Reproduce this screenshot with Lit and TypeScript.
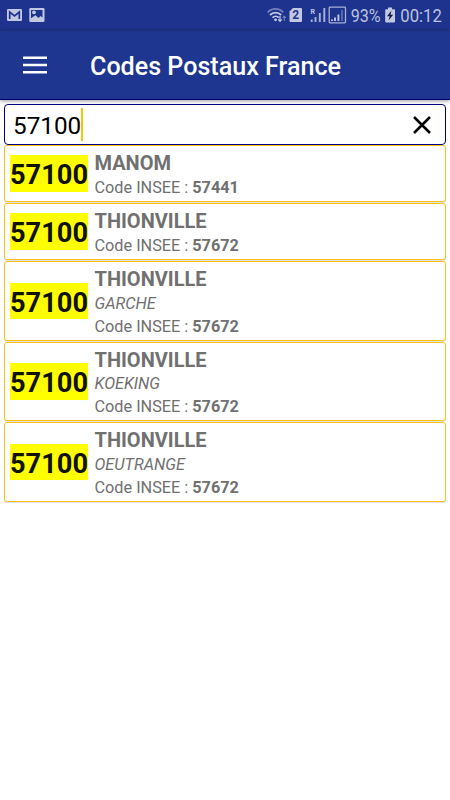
import { LitElement, html, css, nothing } from "lit";
import { customElement, property } from "lit/decorators.js";

@customElement("status-bar")
class StatusBar extends LitElement {
  static styles = css`
    :host { display: flex; align-items: center; height: 30px; background: #1d338e; }
    svg { display: block; width: 450px; height: 30px; }
    .digits { font-family: Roboto, sans-serif; font-size: 19px; fill: #bcc2df; }
    .small { font: bold 12px Roboto, sans-serif; fill: #1d338e; }
    .tiny { font: bold 7px Roboto, sans-serif; fill: #c3c8e2; }
  `;
  render() {
    return html`<svg viewBox="0 0 450 30">
      <rect x="7" y="9" width="15" height="12" rx="1.2" fill="#c3c8e2" />
      <path d="M9.7 19V12L14.5 16L19.3 12V19" fill="none" stroke="#1d338e" stroke-width="1.7" />
      <rect x="29.3" y="8" width="15.2" height="14" rx="1.2" fill="#c3c8e2" />
      <path d="M31 10H42.500V17.500L40.500 16L38.500 18L35.500 15.300L31 18.300Z" fill="#1d338e" />
      <circle cx="34" cy="12.3" r="1.9" fill="#c3c8e2" />
      <g fill="none" stroke-width="1.9">
        <path d="M267.7 12.3C272 7.7 279 7.7 283.2 12.3" stroke="#7581bb" />
        <path d="M270 15C273.2 11.8 278 11.8 281.2 15" stroke="#c3c8e2" />
        <path d="M272.5 17.6C274.3 15.9 277 15.9 278.8 17.6" stroke="#c3c8e2" />
      </g>
      <circle cx="275.5" cy="19.8" r="1.4" fill="#c3c8e2" />
      <path d="M280 16V21M278.2 19.3L280 21.3L281.8 19.3" stroke="#c3c8e2" stroke-width="1.2" fill="none" />
      <path d="M284.3 21V16M282.7 17.9L284.3 16L285.9 17.9" stroke="#7581bb" stroke-width="1.1" fill="none" />
      <path d="M293 8H301Q302 8 302 9V21Q302 22 301 22H290.5Q289.500 22 289.500 21V11.500Z" fill="#c3c8e2" />
      <text class="small" x="292.200" y="19.300">2</text>
      <text class="tiny" x="310.600" y="13.800">R</text>
      <path d="M311.700 19.500V22M315.500 17V22M319.800 13V22M324.300 8V22" stroke="#aab1d6" stroke-width="1.900" />
      <rect x="329.200" y="7.200" width="16.300" height="15.600" rx=".8" fill="none" stroke="#aab1d6" stroke-width="1.300" />
      <path d="M332 19.500V21M335 17.500V21M338.400 14.500V21" stroke="#c3c8e2" stroke-width="1.900" />
      <path d="M342 10V21" stroke="#596aaf" stroke-width="1.900" />
      <text class="digits" x="350.700" y="22" textLength="30" lengthAdjust="spacingAndGlyphs">93%</text>
      <path d="M388 7.500H392V9.200H394Q395 9.200 395 10.200V21.500Q395 22.500 394 22.500H386.200Q385.200 22.500 385.200 21.500V10.200Q385.200 9.200 386.200 9.200H388Z" fill="#c3c8e2" />
      <path d="M391.500 10.500L387 16.200H389.700L388.500 20.500L393.200 14.700H390.500Z" fill="#101a42" />
      <text class="digits" x="400.300" y="22" textLength="41.500" lengthAdjust="spacingAndGlyphs">00:12</text>
    </svg>`;
  }
}

@customElement("postal-card")
class PostalCard extends LitElement {
  @property() name = "";
  @property() area = "";
  @property() insee = "";
  static styles = css`
    :host { display: flex; align-items: center; box-sizing: border-box; height: 57px; margin-bottom: 1px; padding-left: 5px; background: #fff; border: 1px solid #fbc21c; border-radius: 3px; box-shadow: 0 1px 0 #e0e0e4; color: #707070; font: 16.250px/22.700px Roboto, sans-serif; }
    :host([area]) { height: 79.600px; }
    .zip { box-sizing: border-box; width: 78px; height: 36.500px; padding-top: 2px; margin-right: 6.500px; background: #ff0; color: #111100; font-weight: 700; font-size: 27.200px; line-height: 37.500px; text-align: center; white-space: nowrap; }
    .info { padding-top: 3px; }
    .name { margin-bottom: .600px; font-weight: 700; font-size: 20px; line-height: 26px; }
    .area { font-style: italic; }
    b { font-weight: 700; }
  `;
  render() {
    return html`<div class="zip">57100</div>
      <div class="info">
        <div class="name">${this.name}</div>
        ${this.area ? html`<div class="area">${this.area}</div>` : nothing}
        <div>Code INSEE : <b>${this.insee}</b></div>
      </div>`;
  }
}

const results = [
  { name: "MANOM", insee: "57441" },
  { name: "THIONVILLE", insee: "57672" },
  { name: "THIONVILLE", area: "GARCHE", insee: "57672" },
  { name: "THIONVILLE", area: "KOEKING", insee: "57672" },
  { name: "THIONVILLE", area: "OEUTRANGE", insee: "57672" },
];

@customElement("app-root")
class AppRoot extends LitElement {
  static styles = css`
    :host { display: block; height: 800px; overflow: hidden; background: #fff; font-family: Roboto, sans-serif; }
    header { display: flex; align-items: center; box-sizing: border-box; height: 70px; padding: 2px 0 0 23px; background: #1e368f; border-top: 1px solid #1b3078; border-bottom: 1px solid #000070; box-shadow: 0 1px 4px rgba(0, 0, 0, .4); color: #fff; }
    header svg { width: 24px; height: 18px; margin: 0 43px 3px 0; }
    h1 { margin: 0; padding-top: 2px; font-size: 25.100px; font-weight: 500; line-height: 36px; white-space: nowrap; }
    main { padding: 4px 4px 0; }
    .search { display: flex; align-items: center; box-sizing: border-box; height: 41px; padding: 0 14px 0 8px; border: 1px solid #000080; border-radius: 4px; background: #fff; font-size: 24.300px; color: #000; }
    .query { padding-top: 2px; line-height: 39px; }
    .caret { width: 2px; height: 33px; margin-left: -.200px; background: #fcc200; }
    .clear { width: 18px; height: 18px; margin-left: auto; }
  `;
  render() {
    return html`<status-bar></status-bar>
      <header>
        <svg viewBox="0 0 24 18"><path d="M0 1.700H24M0 9H24M0 16.300H24" stroke="#fff" stroke-width="2.500" /></svg>
        <h1>Codes Postaux France</h1>
      </header>
      <main>
        <div class="search">
          <span class="query">57100</span><span class="caret"></span>
          <svg class="clear" viewBox="0 0 18 18"><path d="M1 1L17 17M17 1L1 17" stroke="#000" stroke-width="2.500" /></svg>
        </div>
        <div>
          ${results.map((r) => r.area
            ? html`<postal-card name=${r.name} area=${r.area} insee=${r.insee}></postal-card>`
            : html`<postal-card name=${r.name} insee=${r.insee}></postal-card>`)}
        </div>
      </main>`;
  }
}
